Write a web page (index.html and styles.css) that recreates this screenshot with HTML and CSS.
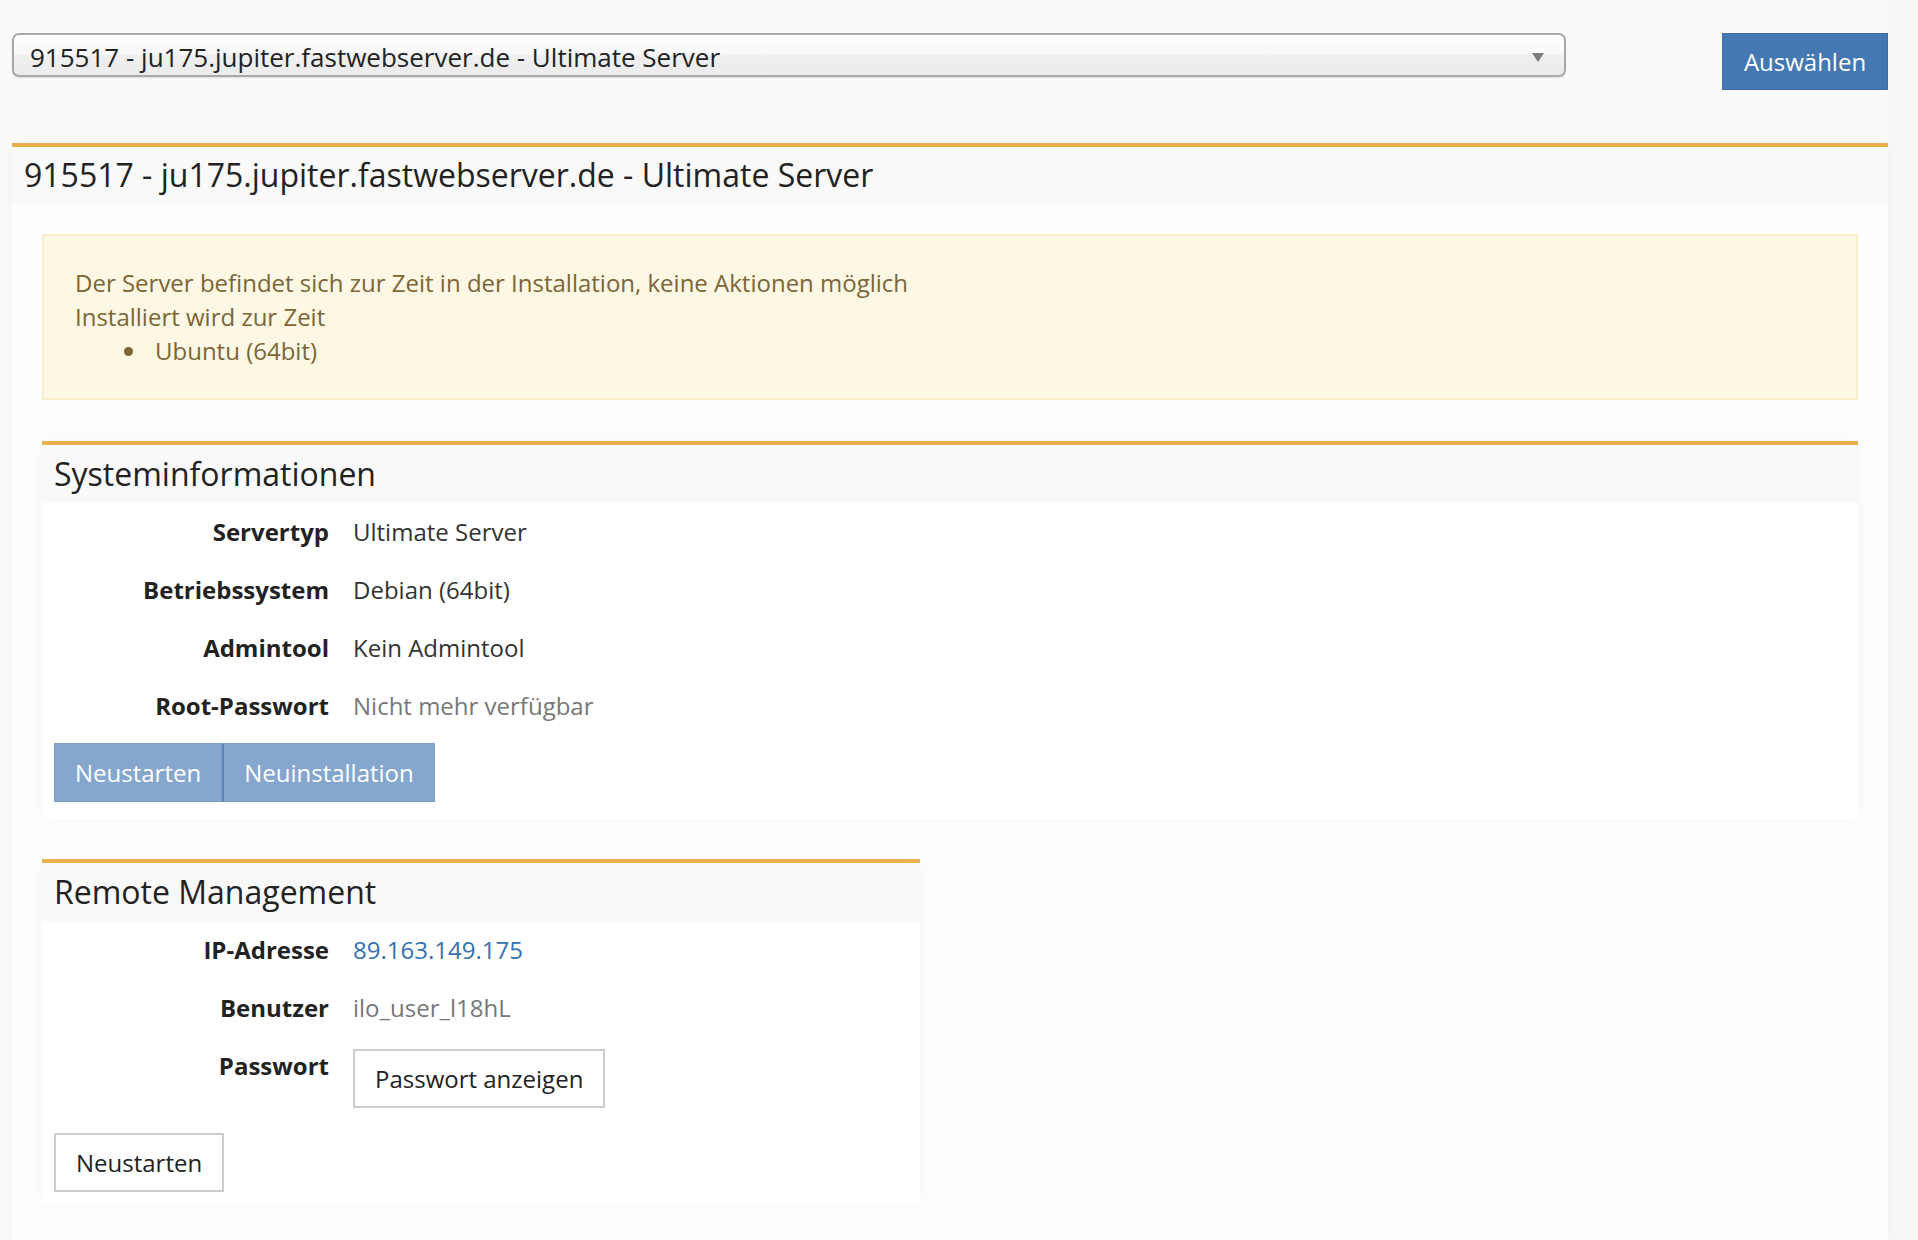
FILE: index.html
```html
<!DOCTYPE html>
<html lang="de">
<head>
	<meta charset="UTF-8">
	<title>Server</title>
	<link rel="stylesheet" href="styles.css">
</head>
<body>
	<div id="page">
		<form id="chooser">
			<div class="select-wrap">
				<select id="server">
					<option>915517 - ju175.jupiter.fastwebserver.de - Ultimate Server</option>
				</select>
			</div>
			<button type="button" class="btn btn-primary">Auswählen</button>
		</form>

		<div class="panel main">
			<h2 class="panel-title">915517 - ju175.jupiter.fastwebserver.de - Ultimate Server</h2>
			<div class="panel-body">
				<div class="alert">
					<p>Der Server befindet sich zur Zeit in der Installation, keine Aktionen möglich</p>
					<p>Installiert wird zur Zeit</p>
					<ul>
						<li>Ubuntu (64bit)</li>
					</ul>
				</div>

				<div class="panel sub">
					<h3 class="panel-title">Systeminformationen</h3>
					<div class="panel-body">
						<dl class="info">
							<dt>Servertyp</dt>
							<dd>Ultimate Server</dd>
							<dt>Betriebssystem</dt>
							<dd>Debian (64bit)</dd>
							<dt>Admintool</dt>
							<dd>Kein Admintool</dd>
							<dt>Root-Passwort</dt>
							<dd class="muted">Nicht mehr verfügbar</dd>
						</dl>
						<div class="btn-group">
							<button type="button" class="btn btn-disabled">Neustarten</button>
							<button type="button" class="btn btn-disabled">Neuinstallation</button>
						</div>
					</div>
				</div>

				<div class="panel sub remote">
					<h3 class="panel-title">Remote Management</h3>
					<div class="panel-body">
						<dl class="info">
							<dt>IP-Adresse</dt>
							<dd><a href="#">89.163.149.175</a></dd>
							<dt>Benutzer</dt>
							<dd class="muted">ilo_user_l18hL</dd>
							<dt>Passwort</dt>
							<dd><button type="button" class="btn btn-default">Passwort anzeigen</button></dd>
						</dl>
						<button type="button" class="btn btn-default restart">Neustarten</button>
					</div>
				</div>
			</div>
		</div>
	</div>
</body>
</html>
```

FILE: styles.css
```css
*{
	margin: 0;
	padding: 0;
	box-sizing: border-box;
}
html, body{
	height: 100%;
}
body{
	background: #f7f7f7;
	font-family: "Open Sans", "Liberation Sans", sans-serif;
	font-size: 24px;
	line-height: 34px;
	color: #333;
	overflow: hidden;
}
ul{
	list-style: none;
}
#page{
	width: 1888px;
	min-height: 100%;
	padding: 33px 0 0 12px;
	background: #fafafa;
}
#chooser{
	display: flex;
	justify-content: space-between;
	align-items: flex-start;
}
.select-wrap{
	position: relative;
	width: 1554px;
}
.select-wrap::after{
	content: "";
	position: absolute;
	right: 22px;
	top: 20px;
	border-left: 6px solid transparent;
	border-right: 6px solid transparent;
	border-top: 9px solid #7b7b7b;
}
#server{
	appearance: none;
	-webkit-appearance: none;
	width: 100%;
	height: 44px;
	padding: 4px 40px 0 16px;
	border: 2px solid #a8a8a8;
	border-radius: 7px;
	background: linear-gradient(#ffffff 0%, #f8f8f8 48%, #efefef 52%, #ececec 100%);
	box-shadow: 0 1px 2px rgba(0,0,0,0.12);
	font-family: inherit;
	font-size: 26px;
	color: #222;
}
.btn{
	font-family: inherit;
	font-size: 24px;
	line-height: 34px;
	cursor: pointer;
	border: 1px solid transparent;
	background: none;
}
.btn-primary{
	width: 166px;
	height: 57px;
	background: #4478b3;
	border-color: #3e6da3;
	color: #fff;
}
.panel{
	border-top: 4px solid #ebb04c;
	box-shadow: 0 0 18px rgba(0,0,0,0.035);
}
.panel-title{
	background: #f9f9f9;
	font-weight: normal;
	color: #222;
	font-size: 32px;
	line-height: 56px;
}
.main{
	margin-top: 53px;
	min-height: 1100px;
	background: #fefefe;
}
.main > .panel-title{
	padding-left: 12px;
}
.main > .panel-body{
	padding: 31px 30px 0 30px;
}
.alert{
	background: #fcf8e3;
	border: 2px solid #f8ecca;
	color: #7d6537;
	padding: 30px 31px 30px 31px;
}
.alert ul{
	list-style: disc;
	padding-left: 73px;
}
.alert li{
	padding-left: 7px;
}
.sub{
	margin-top: 41px;
	background: #fff;
}
.sub .panel-title{
	padding-left: 12px;
	line-height: 58px;
}
.sub .panel-body{
	padding: 12px 12px 17px 12px;
}
.info{
	display: grid;
	grid-template-columns: 275px 1fr;
	column-gap: 24px;
	row-gap: 24px;
}
.info dt{
	font-weight: bold;
	color: #222;
	text-align: right;
}
.info dd{
	color: #333;
}
.info .muted{
	color: #777;
}
.info a{
	color: #3572b0;
	text-decoration: none;
}
.btn-group{
	display: flex;
	margin-top: 20px;
}
.btn-disabled{
	height: 59px;
	padding: 0 20px;
	background: #85a7cd;
	border: 1px solid #7d9fc6;
	color: #fff;
}
.btn-disabled + .btn-disabled{
	border-left: 2px solid #5a83b4;
}
.remote{
	width: 878px;
	margin-top: 40px;
}
.remote .panel-body{
	padding-bottom: 12px;
}
.btn-default{
	height: 59px;
	padding: 0 20px;
	background: #fff;
	border: 2px solid #cdcdcd;
	color: #222;
}
.restart{
	margin-top: 25px;
}
```
